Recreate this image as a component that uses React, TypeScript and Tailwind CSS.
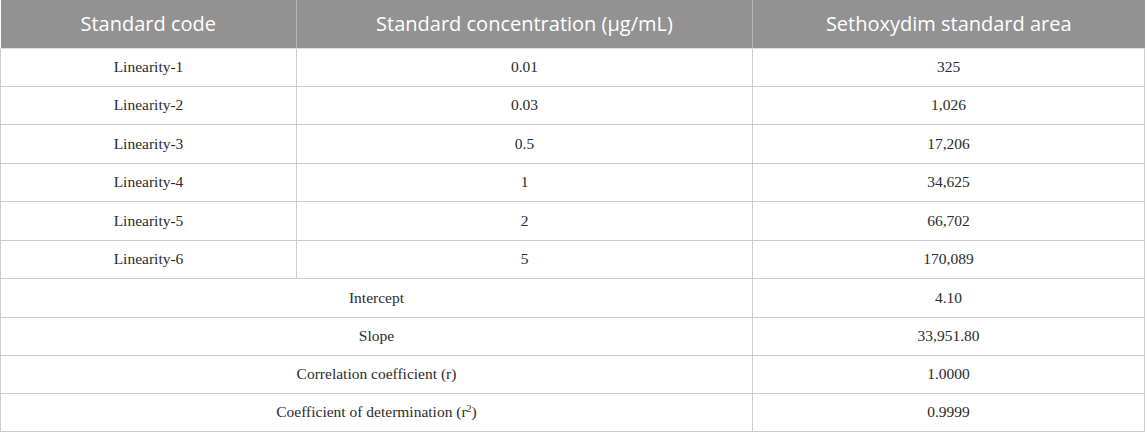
const rows: [string, string, string][] = [
  ["Linearity-1", "0.01", "325"],
  ["Linearity-2", "0.03", "1,026"],
  ["Linearity-3", "0.5", "17,206"],
  ["Linearity-4", "1", "34,625"],
  ["Linearity-5", "2", "66,702"],
  ["Linearity-6", "5", "170,089"],
];

const stats: [React.ReactNode, string][] = [
  ["Intercept", "4.10"],
  ["Slope", "33,951.80"],
  ["Correlation coefficient (r)", "1.0000"],
  [
    <>
      Coefficient of determination (r<span className="relative -top-[5px] text-[10px]">2</span>)
    </>,
    "0.9999",
  ],
];

const heights = ["h-[38px]", "h-[38px]", "h-[39px]", "h-[38px]", "h-[39px]", "h-[38px]", "h-[39px]", "h-[38px]", "h-[38px]", "h-[38px]"];

export default function App() {
  const cell = "border border-[#cccccc] text-center align-middle p-0";
  return (
    <div className="w-[1145px] h-[433px] bg-white overflow-hidden">
      <table className="w-[1144px] table-fixed border-collapse text-[#2b2b2b] text-[15.5px] font-['Liberation_Serif',serif]">
        <colgroup>
          <col className="w-[296px]" />
          <col className="w-[456px]" />
          <col className="w-[392px]" />
        </colgroup>
        <thead>
          <tr className="h-[48px] bg-[#929292] text-white text-[20px] font-['Open_Sans',sans-serif]">
            <th className="border-r border-[#b4b4b4] border-b border-b-[#dddddd] font-normal">Standard code</th>
            <th className="border-r border-[#b4b4b4] border-b border-b-[#dddddd] font-normal">Standard concentration (μg/mL)</th>
            <th className="border-b border-[#dddddd] font-normal">Sethoxydim standard area</th>
          </tr>
        </thead>
        <tbody>
          {rows.map((r, i) => (
            <tr key={i} className={heights[i]}>
              <td className={cell}>{r[0]}</td>
              <td className={cell}>{r[1]}</td>
              <td className={cell}>{r[2]}</td>
            </tr>
          ))}
          {stats.map((s, i) => (
            <tr key={"s" + i} className={heights[i + 6]}>
              <td colSpan={2} className={cell}>{s[0]}</td>
              <td className={cell}>{s[1]}</td>
            </tr>
          ))}
        </tbody>
      </table>
    </div>
  );
}
